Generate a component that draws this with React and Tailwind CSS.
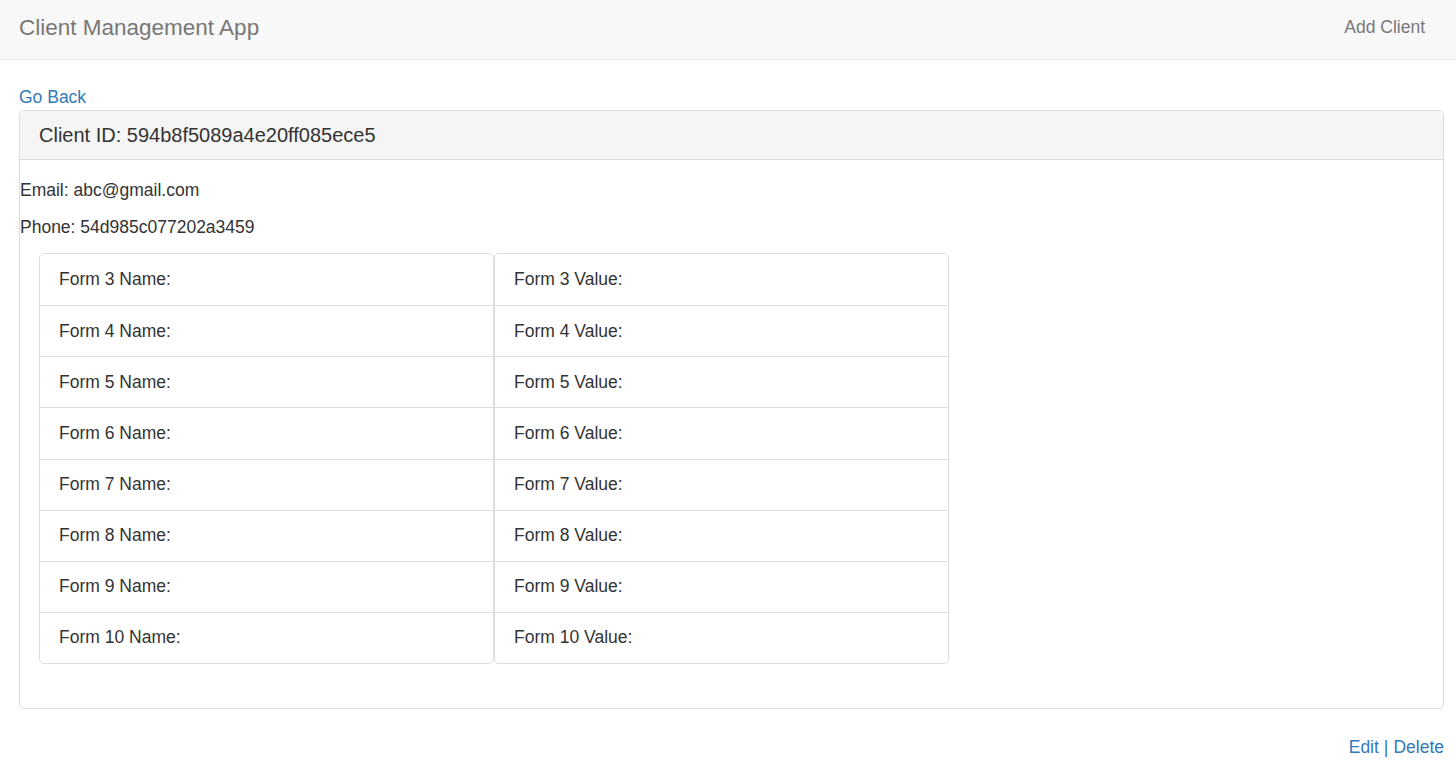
import React from "react";

const forms = [3, 4, 5, 6, 7, 8, 9, 10];

function FieldList({ label, width }) {
  return (
    <div className={`${width} border border-[#ddd] rounded-[5px] bg-white`}>
      {forms.map((n, idx) => (
        <div
          key={n}
          className={`h-[51.125px] flex items-center px-[19px] ${idx > 0 ? "border-t border-[#ddd]" : ""}`}
        >
          Form {n} {label}:
        </div>
      ))}
    </div>
  );
}

export default function App() {
  return (
    <div className="min-h-screen bg-white text-[#333] text-[17.5px] leading-[25px] font-['Liberation_Sans',Arial,sans-serif]">
      {/* Navbar */}
      <nav className="h-[60px] bg-[#f8f8f8] border-b border-[#e7e7e7] flex items-center justify-between pl-[19px] pr-[31px] pb-[5px]">
        <span className="text-[22.5px] text-[#777]">Client Management App</span>
        <span className="text-[#777]">Add Client</span>
      </nav>

      <div className="pl-[19px] pr-[12px] pt-[25px]">
        <a href="#" className="block text-[#337ab7]">Go Back</a>

        {/* Panel */}
        <div className="border border-[#ddd] rounded-[5px]">
          <div className="h-[49px] bg-[#f5f5f5] border-b border-[#ddd] rounded-t-[5px] flex items-center px-[19px]">
            <h3 className="text-[20px] leading-[22px]">Client ID: 594b8f5089a4e20ff085ece5</h3>
          </div>
          <div className="pt-[18px] pb-[44px]">
            <p className="mb-[12px]">Email: abc@gmail.com</p>
            <p className="mb-[13px]">Phone: 54d985c077202a3459</p>
            <div className="flex ml-[19px]">
              <FieldList label="Name" width="w-[455px]" />
              <FieldList label="Value" width="w-[455px]" />
            </div>
          </div>
        </div>

        <div className="mt-[26px] flex justify-end text-[#337ab7]">
          <a href="#">Edit</a>
          <span className="mx-[5px]">|</span>
          <a href="#">Delete</a>
        </div>
      </div>
    </div>
  );
}
